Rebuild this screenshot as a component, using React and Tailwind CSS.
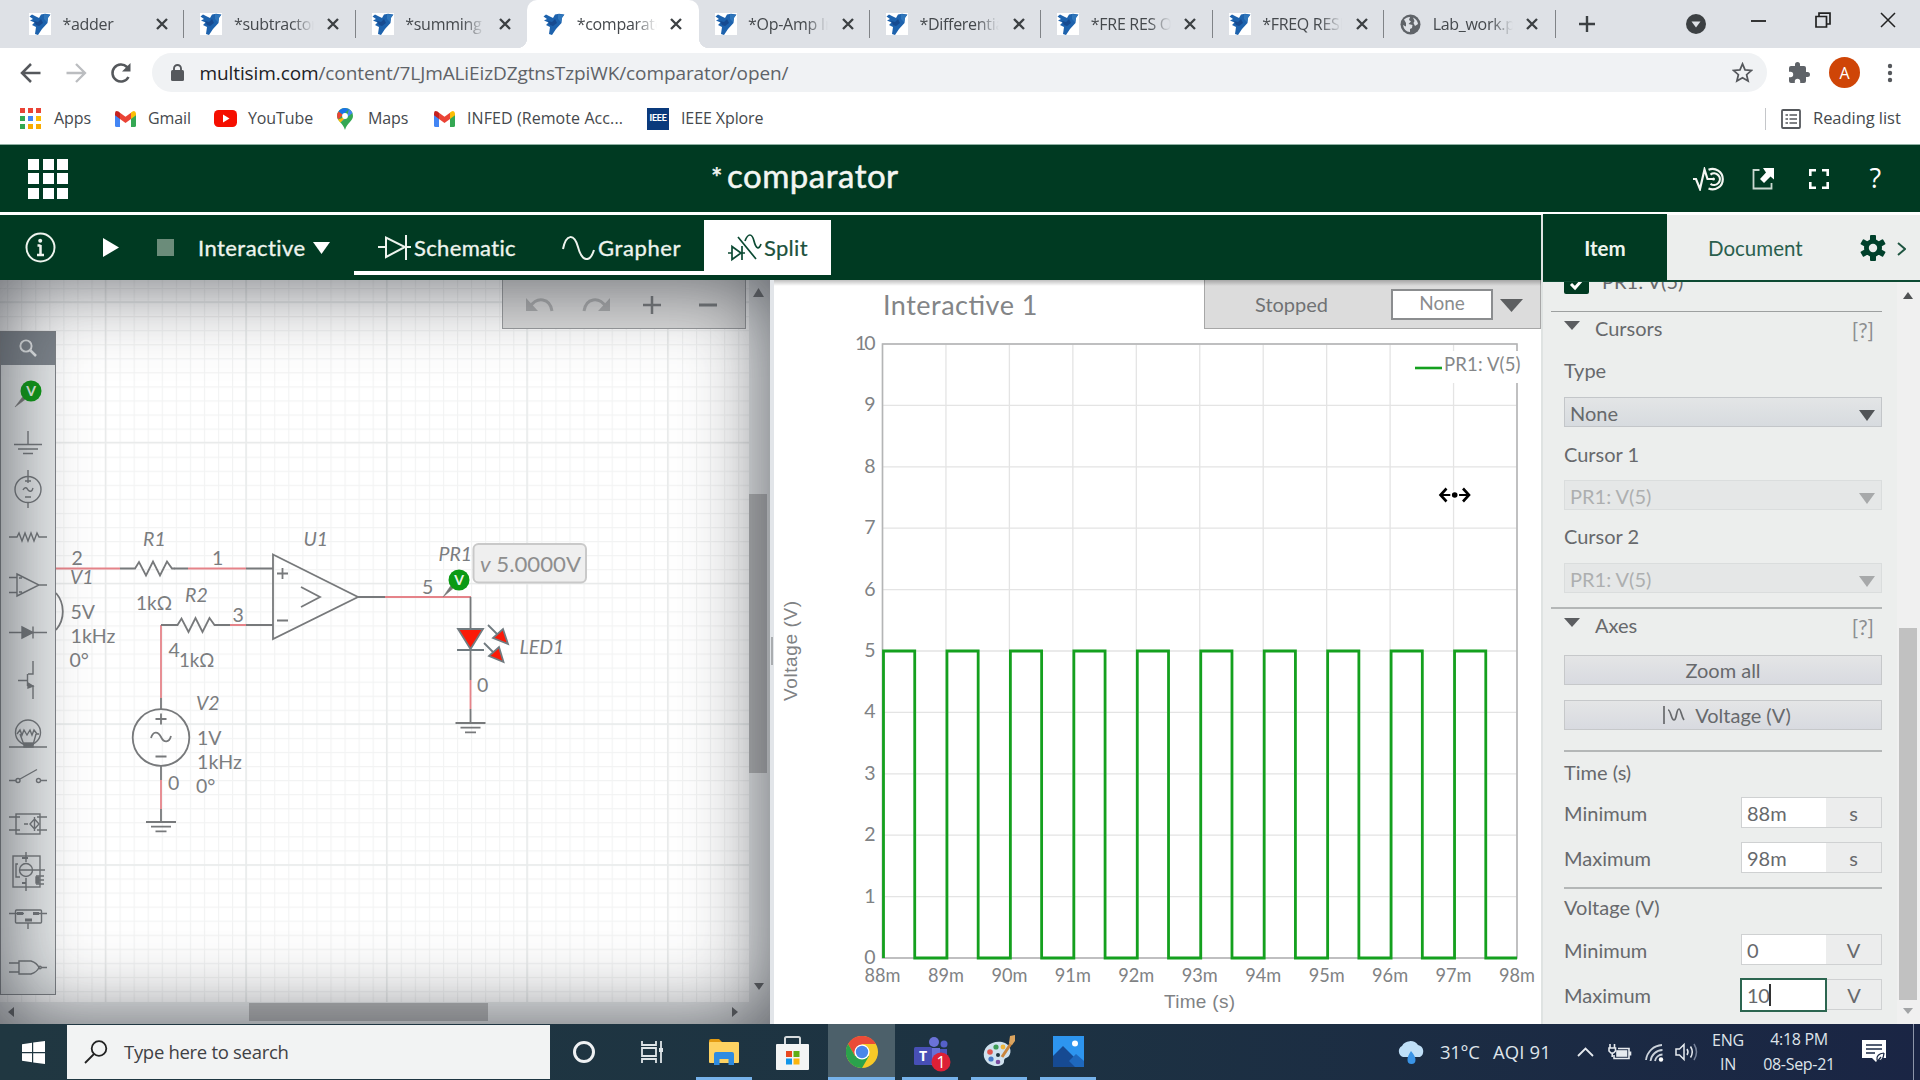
import React from 'react';

const UI = "font-['Open_Sans','Noto_Sans',sans-serif]";

/* ---------- Browser chrome ---------- */

const NiBird = () => (
  <svg width="22" height="22" viewBox="0 0 22 22" className="shrink-0">
    <rect width="22" height="22" fill="#fff" />
    <path d="M0.500 3.500 L3 1.500 L8 4 L10 5 L12 1.500 L16 0.800 L21.500 1.500 L19 4.500 L18.500 10 L13 16 L9 22 L6 21 L7 14 L3 12 L5.500 9.500 L1 7.500 L4 6 Z" fill="#1d62ad" />
    <path d="M5 8 L9 9 L12 6 L14 10 L10 13 L7 12 Z" fill="#164a90" />
    <path d="M15 1 L21 2 L19 5 L18 9 L15 6 Z" fill="#2f76bb" />
  </svg>
);

const GlobeIcon = () => (
  <svg width="21" height="21" viewBox="0 0 21 21" className="shrink-0">
    <circle cx="10.500" cy="10.500" r="10" fill="#5f6368" />
    <path d="M4 5.500 Q7 2.500 10 3 L9 6 L11 7.500 L8.500 10 L12.500 11 L12 14 L10 15 L10 18 Q4 17.500 3 11 L6 12.500 L6 9 Z M13 3.500 Q17.500 5.500 18 10 L15 12 L13.500 9 L14.500 7 Z" fill="#dee1e6" />
  </svg>
);

const Close = () => (
  <svg width="12" height="12" viewBox="0 0 12 12" className="shrink-0">
    <path d="M1 1 L11 11 M11 1 L1 11" stroke="#3c4043" strokeWidth="2.300" />
  </svg>
);

const tabs = [
  { t: '*adder', sep: true },
  { t: '*subtractor', sep: true },
  { t: '*summing' },
  { t: '*comparator', active: true },
  { t: '*Op-Amp In', sep: true },
  { t: '*Differential', sep: true },
  { t: '*FRE RES OF', sep: true },
  { t: '*FREQ RESP', sep: true },
  { t: 'Lab_work.pdf', globe: true, sep: true },
];

function Tab({ tab }) {
  return (
    <div className={'relative flex h-[48px] w-[171.4px] shrink-0 items-center pl-[16px] ' + (tab.active ? 'rounded-t-[10px] bg-white' : '')}>
      {tab.active && (
        <>
          <span className="absolute bottom-0 -left-[10px] h-[10px] w-[10px] bg-[radial-gradient(circle_at_0_0,transparent_10px,white_10.5px)]" />
          <span className="absolute bottom-0 -right-[10px] h-[10px] w-[10px] bg-[radial-gradient(circle_at_100%_0,transparent_10px,white_10.5px)]" />
        </>
      )}
      {tab.globe ? <GlobeIcon /> : <NiBird />}
      <span className="ml-[11.5px] w-[80px] overflow-hidden text-[16px] tracking-[-0.3px] whitespace-nowrap text-[#45494d] [mask-image:linear-gradient(to_right,black_72%,transparent)]">{tab.t}</span>
      <span className="ml-[13.5px]"><Close /></span>
      {tab.sep && <span className="absolute top-[10px] right-0 h-[28px] w-px bg-[#808387]" />}
    </div>
  );
}

function TabStrip() {
  return (
    <div className="flex h-[48px] items-center bg-[#dee1e6] pl-[13px]">
      {tabs.map((t) => <Tab key={t.t} tab={t} />)}
      <svg width="18" height="18" viewBox="0 0 18 18" className="ml-[22px]"><path d="M9 1 V17 M1 9 H17" stroke="#3c4043" strokeWidth="2.400" /></svg>
      <svg width="20" height="20" viewBox="0 0 20 20" className="ml-[90px]"><circle cx="10" cy="10" r="10" fill="#3c4043" /><path d="M5.500 7.500 H14.500 L10 13.500 Z" fill="#dee1e6" /></svg>
      <div className="mb-[8px] ml-[45px] flex items-center">
        <svg width="15" height="15" viewBox="0 0 15 15"><path d="M0 8 H15" stroke="#222" strokeWidth="1.800" /></svg>
        <svg width="16" height="16" viewBox="0 0 16 16" className="ml-[49px]"><path d="M1 4.500 H11.500 V15 H1 Z M4 4.500 V1.200 H15 V12 H11.500" fill="none" stroke="#222" strokeWidth="1.700" /></svg>
        <svg width="16" height="16" viewBox="0 0 16 16" className="ml-[49px]"><path d="M1 1 L15 15 M15 1 L1 15" stroke="#222" strokeWidth="1.500" /></svg>
      </div>
    </div>
  );
}

function AddressBar() {
  return (
    <div className="flex h-[49px] items-center bg-white pl-[20px]">
      <svg width="22" height="22" viewBox="0 0 22 22"><path d="M20.500 11 H2.500 M11 2 L2 11 L11 20" fill="none" stroke="#55585c" strokeWidth="2.500" /></svg>
      <svg width="22" height="22" viewBox="0 0 22 22" className="ml-[23px]"><path d="M1.500 11 H19.500 M11 2 L20 11 L11 20" fill="none" stroke="#bbbdc0" strokeWidth="2.300" /></svg>
      <svg width="22" height="22" viewBox="0 0 22 22" className="ml-[23px]"><path d="M18.500 15 A8.500 8.500 0 1 1 17 5 L19 7" fill="none" stroke="#55585c" strokeWidth="2.500" /><path d="M20.500 1 V9.500 H12 Z" fill="#55585c" /></svg>
      <div className="ml-[20px] flex h-[39px] w-[1615px] items-center rounded-full bg-[#f0f2f4] pl-[19px]">
        <svg width="13" height="17" viewBox="0 0 13 17"><rect y="6" width="13" height="11" rx="1.500" fill="#55585c" /><path d="M3 7 V4.500 A3.500 3.500 0 0 1 10 4.500 V7" fill="none" stroke="#55585c" strokeWidth="1.900" /></svg>
        <span className="ml-[15.5px] w-[1532.5px] pt-[2px] text-[19px] tracking-[-0.1px] whitespace-nowrap text-[#5f6368]"><span className="text-[#202124]">multisim.com</span>/content/7LJmALiEizDZgtnsTzpiWK/comparator/open/</span>
        <svg width="21" height="21" viewBox="0 0 24 24" className="shrink-0"><path d="M12 2.200 L14.900 9 L22.300 9.600 L16.700 14.500 L18.400 21.700 L12 17.900 L5.600 21.700 L7.300 14.500 L1.700 9.600 L9.100 9 Z" fill="none" stroke="#55585c" strokeWidth="2" /></svg>
      </div>
      <svg width="24" height="24" viewBox="0 0 24 24" className="ml-[20px]"><path d="M20.500 11H19V7a2 2 0 0 0-2-2h-4V3.500a2.500 2.500 0 0 0-5 0V5H4a2 2 0 0 0-2 2v3.800h1.500a2.700 2.700 0 0 1 0 5.400H2V20a2 2 0 0 0 2 2h3.800v-1.500a2.700 2.700 0 0 1 5.400 0V22H17a2 2 0 0 0 2-2v-4h1.500a2.500 2.500 0 0 0 0-5z" fill="#5f6368" /></svg>
      <span className="ml-[18px] flex h-[31px] w-[31px] items-center justify-center rounded-full bg-[#cf4507] text-[16px] text-white">A</span>
      <svg width="6" height="20" viewBox="0 0 6 20" className="ml-[27px]"><g fill="#55585c"><circle cx="3" cy="3" r="2.200" /><circle cx="3" cy="10" r="2.200" /><circle cx="3" cy="17" r="2.200" /></g></svg>
    </div>
  );
}

const GmailIcon = () => (
  <svg width="21" height="16" viewBox="0 0 21 16" className="shrink-0">
    <path d="M0 3 V14.500 Q0 16 1.500 16 H5 V6 Z" fill="#4285f4" />
    <path d="M21 3 V14.500 Q21 16 19.500 16 H16 V6 Z" fill="#34a853" />
    <path d="M16 1.500 V8 L21 4.200 V2.500 Q20.500 -1 17.500 0.400 Z" fill="#fbbc04" />
    <path d="M5 8 V1.700 L10.500 5.800 L16 1.700 V8 L10.500 12 Z" fill="#ea4335" />
    <path d="M0 2.500 V4.200 L5 8 V1.700 L3.500 0.500 Q0 -1 0 2.500 Z" fill="#c5221f" />
  </svg>
);

const appColors = ['#ea4335', '#ea4335', '#ea4335', '#34a853', '#4285f4', '#fbbc04', '#34a853', '#f9ab00', '#f9ab00'];

function Bookmark({ icon, children, cls }) {
  return (
    <div className={'flex shrink-0 items-center ' + cls}>{icon}<span className="-mt-px whitespace-nowrap">{children}</span></div>
  );
}

function Bookmarks() {
  return (
    <div className="flex h-[47px] items-center bg-white pb-[4px] pl-[20px] text-[16px] tracking-[-0.1px] text-[#45494d]">
      <Bookmark cls="w-[95px] gap-[13px]" icon={<span className="grid grid-cols-3 gap-[3px]">{appColors.map((c, i) => <i key={i} className="h-[5px] w-[5px]" style={{ background: c }} />)}</span>}>Apps</Bookmark>
      <Bookmark cls="w-[99px] gap-[12px]" icon={<GmailIcon />}>Gmail</Bookmark>
      <Bookmark cls="w-[123px] gap-[11px]" icon={<svg width="23" height="17" viewBox="0 0 23 17"><rect width="23" height="17" rx="4.500" fill="#f50f00" /><path d="M9 4.500 L15.500 8.500 L9 12.500 Z" fill="#fff" /></svg>}>YouTube</Bookmark>
      <Bookmark cls="w-[97px] gap-[15px]" icon={<svg width="16" height="22" viewBox="0 0 16 22"><path d="M8 0 A8 8 0 0 1 16 8 C16 13 10 15 8 22 C6 15 0 13 0 8 A8 8 0 0 1 8 0 Z" fill="#34a853" /><path d="M8 0 A8 8 0 0 0 1.500 3.500 L6 7 L12 1 Z" fill="#1a73e8" /><path d="M1.500 3.500 A8 8 0 0 0 1 11.500 L6 7 Z" fill="#ea4335" /><path d="M1 11.500 Q2 13 3.500 14.500 L11 8 Z" fill="#fbbc04" /><path d="M12 1 A8 8 0 0 1 15.500 5 L3.500 14.500 L10 8 Z" fill="#4285f4" /><circle cx="8" cy="8" r="2.900" fill="#fff" /></svg>}>Maps</Bookmark>
      <Bookmark cls="w-[213px] gap-[12px] tracking-[0.08px]" icon={<GmailIcon />}>INFED (Remote Acc...</Bookmark>
      <Bookmark cls="w-[200px] gap-[12px]" icon={<span className="flex h-[22px] w-[22px] items-center justify-center bg-[#0a3a7c] font-['Roboto',sans-serif] text-[9px] font-bold tracking-[-0.2px] text-white">IEEE</span>}>IEEE Xplore</Bookmark>
      <div className="ml-auto flex w-[155px] items-center">
        <i className="h-[22px] w-px bg-[#c4c6c9]" />
        <svg width="20" height="20" viewBox="0 0 20 20" className="mr-[12px] ml-[15px]"><rect x="1" y="1" width="18" height="18" rx="1" fill="none" stroke="#55585c" strokeWidth="1.800" /><path d="M4.500 6 H7 M8.500 6 H16 M4.500 10 H7 M8.500 10 H16 M4.500 14 H7 M8.500 14 H16" stroke="#55585c" strokeWidth="1.700" /></svg>
        <span className="text-[16.5px] tracking-[-0.05px] whitespace-nowrap">Reading list</span>
      </div>
    </div>
  );
}

/* ---------- Application header ---------- */

function AppHeader() {
  return (
    <div className="flex h-[68px] items-center border-t border-[#8fb0a3] bg-[#003a22] pl-[28px] font-['Lato',sans-serif] text-white">
      <div className="grid grid-cols-3 gap-[3.5px]">
        {Array.from({ length: 9 }, (_, i) => <i key={i} className="h-[11px] w-[11px] bg-white" />)}
      </div>
      <h1 className="-mt-[5px] ml-[643px] w-[981.5px] text-[33px] tracking-[0.5px] whitespace-nowrap text-[#f3f6f2] [-webkit-text-stroke:0.5px_#f3f6f2]"><span className="text-[27px]">*</span><span className="ml-[4px]">comparator</span></h1>
      <svg width="33" height="24" viewBox="0 0 33 24" fill="none" stroke="#f3f6f2" strokeWidth="2.200"><path d="M0 12 H3 L7 22 L11.500 2.500 L14.500 12 H21" /><path d="M15.500 2.800 A10.200 10.200 0 1 1 15.500 21.500" /><path d="M17.500 7.600 A5.800 5.800 0 1 1 17.500 16.800" /><circle cx="20.500" cy="12" r="1.500" fill="#f3f6f2" stroke="none" /></svg>
      <svg width="22" height="22" viewBox="0 0 22 22" className="ml-[26px]"><path d="M7.500 2 H1.500 V20.500 H19.500 V15" fill="none" stroke="#c9d8cf" strokeWidth="1.800" /><path d="M11 0 H22 V11.500 L18.500 8.500 L12 15 L8 11 L14 4.500 Z" fill="#fff" /></svg>
      <svg width="20" height="20" viewBox="0 0 20 20" className="ml-[35px]" fill="none" stroke="#fff" strokeWidth="2.600"><path d="M1.300 7 V1.300 H7 M13 1.300 H18.700 V7 M18.700 13 V18.700 H13 M7 18.700 H1.300 V13" /></svg>
      <span className="ml-[41px] font-['Open_Sans',sans-serif] text-[27px]">?</span>
    </div>
  );
}

function Toolbar() {
  return (
    <div className="flex h-[65px] w-[1541px] items-center bg-[#003a22] text-[22px] text-[#eef4ee] [-webkit-text-stroke:0.35px]">
      <svg width="31" height="31" viewBox="0 0 31 31" className="ml-[25px]"><circle cx="15.500" cy="15.500" r="14" fill="none" stroke="#eef4ee" strokeWidth="2" /><path d="M15.500 13 V23 M12.500 13.500 H15.500 M12 23 H19" stroke="#eef4ee" strokeWidth="2.500" /><circle cx="15.200" cy="8.800" r="2" fill="#eef4ee" /></svg>
      <svg width="16" height="19" viewBox="0 0 16 19" className="ml-[47px]"><path d="M0 0 L16 9.500 L0 19 Z" fill="#fff" /></svg>
      <i className="ml-[38px] h-[17px] w-[17px] bg-[#6b8c7a]" />
      <span className="ml-[24px] w-[115px] tracking-[0.45px] whitespace-nowrap">Interactive</span>
      <svg width="17" height="12" viewBox="0 0 17 12"><path d="M0 0 H17 L8.500 12 Z" fill="#fff" /></svg>
      <div className="mt-[5px] ml-[24px] flex h-[55px] w-[350px] items-center self-start border-b-4 border-white pt-[4px]">
        <svg width="33" height="26" viewBox="0 0 33 26" className="ml-[24px]" fill="none" stroke="#eef4ee" strokeWidth="2"><path d="M0 12 H8 M8 2.500 V22 L27 12 Z M28 0 V25 M28 12 H33" /></svg>
        <span className="ml-[3px] w-[148px] tracking-[0.35px] whitespace-nowrap">Schematic</span>
        <svg width="33" height="24" viewBox="0 0 33 24" fill="none" stroke="#eef4ee" strokeWidth="2"><path d="M1 13 C4 -2 12 -3 16 11 C20 26 28 27 32 14" /></svg>
        <span className="ml-[3px] tracking-[0.6px] whitespace-nowrap">Grapher</span>
      </div>
      <div className="mt-[5px] flex h-[55px] w-[127px] items-center self-start bg-white text-[#1c513c] [-webkit-text-stroke:0.2px]">
        <svg width="34" height="28" viewBox="0 0 34 28" className="ml-[24px]" fill="none" stroke="#0c4a33" strokeWidth="1.700"><path d="M0 19 H4 M4 12.500 V25.500 L13 19 Z M14 12 V26 M14 19 H17 M10 3 L28 25 M17 7 C20 -1 24 -1 26 7 C28 15 31 16 33 10" /></svg>
        <span className="ml-[2px] tracking-[0.3px]">Split</span>
      </div>
    </div>
  );
}

/* ---------- Schematic ---------- */

const G = '#77797b';
const R = '#e58389';

const Zig = ({ x, y }) => (
  <path d={`M${x} ${y} l2 0 l4 -6.500 l7 13.500 l7 -14 l7 14 l7 -14 l5 7 l2.500 0`} fill="none" stroke={G} strokeWidth="1.800" />
);
const Ground = ({ x, y }) => (
  <path d={`M${x - 15} ${y} h30 M${x - 10} ${y + 4.700} h20 M${x - 5.500} ${y + 9.400} h11`} stroke={G} strokeWidth="1.800" />
);
const Probe = ({ x, y, tx, ty }) => (
  <g>
    <path d={`M${tx} ${ty} L${x - 8.500} ${y + 6} L${x - 6} ${y + 8.500} Z`} fill="#777" stroke="#777" strokeWidth="0.500" />
    <circle cx={x} cy={y} r="10.500" fill="#0b9a14" />
    <text x={x} y={y + 5} textAnchor="middle" fontSize="14" fontWeight="700" fill="#e9f7e9">V</text>
  </g>
);

/* text, x, baseline, italic */
const labels = [
  ['R1', 143, 545.5, 1], ['2', 71.5, 565], ['V1', 70, 584, 1], ['1', 212, 565], ['R2', 185, 602, 1],
  ['3', 232.5, 621.5], ['5V', 70.5, 618.5], ['0°', 69.5, 666.5], ['4', 168.5, 657],
  ['V2', 196, 709.5, 1], ['1V', 197, 745], ['0°', 196, 793], ['0', 168, 790], ['U1', 303.5, 545.5, 1],
  ['PR1', 438.5, 561, 1], ['5', 422, 593.5], ['LED1', 519.5, 654, 1], ['0', 477, 692],
];
const wideLabels = [['1kΩ', 136, 610, 36], ['1kHz', 70.5, 642.5, 45], ['1kΩ', 179, 666.5, 35.5], ['1kHz', 197, 769, 45]];

function SchematicDrawing() {
  return (
    <svg width="770" height="744" viewBox="0 280 770 744" className="absolute inset-0" fontFamily="Lato, sans-serif">
      <defs>
        <pattern id="minor" x="105.500" y="302" width="14.060" height="14.060" patternUnits="userSpaceOnUse">
          <path d="M0.500 0 V14.060 M0 0.500 H14.060" stroke="#f2f3f3" strokeWidth="1.200" />
        </pattern>
      </defs>
      <rect x="0" y="280" width="749" height="722" fill="#fff" />
      <rect x="0" y="280" width="749" height="722" fill="url(#minor)" />
      <g stroke="#e9ebeb" strokeWidth="1.500">
        {[105.500, 246, 386.700, 527, 667.700].map((x) => <path key={x} d={`M${x} 280 V1002`} />)}
        {[302, 442.500, 583.500, 724, 865].map((y) => <path key={y} d={`M0 ${y} H749`} />)}
      </g>
      <g fill="none" stroke={R} strokeWidth="1.800">
        <path d="M56 568.500 H120 M188 568.500 H246 M230 625 H246 M161 625 V698 M161 780 V809 M385 597 H471 M470.500 680 V709" />
      </g>
      <g fill="none" stroke={G} strokeWidth="1.800">
        <path d="M120 568.500 H133 M174 568.500 H188 M246 568.500 H273 M161 625 H176 M216 625 H230 M246 625 H273 M161 698 V709 M161 766 V780 M161 809 V822 M358 597 H385 M470.500 597 V629 M470.500 650 V680 M470.500 709 V723" />
        <path d="M273 554.500 L358 597 L273 639 Z M277 573.500 h11 M282.500 568 v11 M277 620.500 h11 M301 587 L320 597 L301 607" />
        <circle cx="161" cy="737.500" r="28.300" />
        <path d="M155.500 719 h11 M161 713.500 v11 M155.500 756.500 h11 M151 738 C153 731 158 731 161 737 C164 743 169 743 171 736" />
        <path d="M56 593 A28.500 28.500 0 0 1 56 630" />
      </g>
      <Zig x={133} y={568.500} />
      <Zig x={175.500} y={625} />
      <Ground x={161} y={822} />
      <Ground x={470.500} y={723} />
      <g stroke="#717b80" strokeWidth="1.800">
        <path d="M458 629 H483 L470.500 649 Z" fill="#fb1a08" />
        <path d="M457 650 H484 M488 625 L500 637 M484 643 L496 655" />
        <path d="M508 644 L503 629 L493 638 Z M503.500 662 L499 647 L489 656 Z" fill="#fb1a08" />
      </g>
      <Probe x={459} y={580} tx={443} ty={597} />
      <rect x="473.500" y="544" width="112.500" height="38.500" rx="5" fill="#efefef" stroke="#c9c9c9" strokeWidth="2" />
      <text x="480" y="571.500" fontSize="20.500" fill="#8e8e8e" textLength="101" lengthAdjust="spacingAndGlyphs"><tspan fontStyle="italic">v</tspan> 5.0000V</text>
      <g fontSize="19.500" fill="#7b7d7f">
        {labels.map(([t, x, y, it], i) => <text key={i} x={x} y={y} fontStyle={it ? 'italic' : 'normal'}>{t}</text>)}
        {wideLabels.map(([t, x, y, w], i) => <text key={i} x={x} y={y} textLength={w} lengthAdjust="spacingAndGlyphs">{t}</text>)}
      </g>
    </svg>
  );
}

function Palette() {
  return (
    <div className="absolute top-[51px] left-0 flex h-[664px] w-[56px] flex-col border border-[#808488] bg-[#e6e9ea]">
      <div className="flex h-[33px] items-center justify-center bg-[#7e858c] pb-[2px]">
        <svg width="18" height="18" viewBox="0 0 18 18" fill="none" stroke="#eceff0" strokeWidth="1.900"><circle cx="7" cy="7" r="5.600" /><path d="M11 11 L17 17" strokeWidth="2.500" /></svg>
      </div>
      <svg width="54" height="629" viewBox="1 365 54 629" fill="none" stroke="#74787b" strokeWidth="1.400" fontFamily="Lato, sans-serif">
        <g stroke="none"><Probe x={31} y={391} tx={15} ty={407} /></g>
        <path d="M28 431 V444 M14 444.500 H42 M18 449 H38 M23 453.500 H33" />
        <circle cx="28" cy="489.500" r="13" /><path d="M28 470 V483 M25 481 H31 M28 503 V508 M25 497 H31 M23 490 C25 486 27 488 28 490 C30 492 32 492 33 488" />
        <path d="M9 537 H17 L19 533 L22 541 L25 533 L28 541 L31 533 L34 541 L37 533 L39 537 H47" />
        <path d="M17 574 V596 L39 585 Z M9 577.500 H17 M9 592.500 H17 M39 585 H47 M19 578 H22 M19 592 H22" />
        <path d="M9 632.500 H47 M33 626.500 V638.500" /><path d="M22 627 L33 632.500 L22 638 Z" fill="#74787b" />
        <path d="M18 680.500 H27 M27.500 674 V686 M28 674 H33 V661 M28 686 H33 V699" /><path d="M28 683 L33 686 L28 688 Z" fill="#74787b" />
        <circle cx="28" cy="732.500" r="12.500" /><path d="M17 734 L20 730 L22 735 L24 730 L27 735 L30 730 L32 735 L34 730 L37 734 H39 M20 734 L24 745 M36 734 L33 745 M9 747 H47" /><rect x="24" y="743" width="9" height="4" fill="#74787b" />
        <circle cx="18" cy="780.500" r="2" /><circle cx="38.500" cy="780.500" r="2" /><path d="M9 780.500 H16 M40.500 780.500 H47 M20 779 L37 769.500" />
        <rect x="16" y="814" width="24" height="20" /><path d="M9 817 H20 M9 830 H20 M37 817 H47 M37 830 H47 M24 824 H28 M34.500 819 L39 824 L34.500 829 L30 824 Z M34.500 817 V831" />
        <rect x="13" y="856" width="27" height="31" /><circle cx="26" cy="870" r="6.500" /><path d="M26 852 V862 M26 878 V891 M18 864 H16 V877 H20 M20 870 H45 M36 876 H44 M36 880 H44 M36 884 H44" /><rect x="36" y="877" width="3" height="6" fill="#74787b" /><path d="M22 858 H28 M22 883 H26" strokeWidth="2" />
        <rect x="15.500" y="910" width="26" height="13" rx="1" /><path d="M9 913.500 H24 M33 913.500 H47 M28 923 V929" /><path d="M17 913.500 H23 M33 913.500 H39 M25 920 H32" strokeWidth="3" />
        <path d="M19 961 H31 Q37 963 39 967.500 Q37 972 31 974 H19 Z M9 963 H19 M9 972 H19 M41 967.500 H47" /><circle cx="40" cy="967.500" r="1.200" />
      </svg>
    </div>
  );
}

function SchematicPane() {
  return (
    <div className="relative h-[744px] w-[770px] overflow-hidden bg-[#e9ebec]">
      <SchematicDrawing />
      <Palette />
      <div className="absolute top-0 right-0 flex h-[722px] w-[21px] flex-col items-center bg-[#e9ebec]">
        <svg width="11" height="9" viewBox="0 0 11 9" className="mt-[8px] -ml-[2px]"><path d="M0 9 L5.500 0 L11 9 Z" fill="#707274" /></svg>
        <i className="mt-[197px] -ml-[3px] h-[279px] w-[18px] bg-[#b4b5b6]" />
        <svg width="10" height="7" viewBox="0 0 10 7" className="mt-auto mb-[12px] -ml-[2px]"><path d="M0 0 H10 L5 7 Z" fill="#616365" /></svg>
      </div>
      <div className="absolute bottom-0 left-0 flex h-[22px] w-full items-center bg-[#e9ebec] pb-[2px]">
        <svg width="6" height="10" viewBox="0 0 6 10" className="ml-[8px]"><path d="M6 0 V10 L0 5 Z" fill="#616365" /></svg>
        <i className="ml-[235px] h-[18px] w-[239px] bg-[#b4b5b6]" />
        <svg width="6" height="10" viewBox="0 0 6 10" className="ml-[244px]"><path d="M0 0 V10 L6 5 Z" fill="#616365" /></svg>
      </div>
      <div className="absolute top-0 left-[502px] flex h-[49px] w-[244px] items-center justify-between border border-t-0 border-[#9b9d9f] bg-[#dcdcdc] pt-[2px] pr-[23px] pl-[22px]">
        <svg width="29" height="16" viewBox="0 0 29 16"><path d="M1 1 V14 H13 Z" fill="#acadae" /><path d="M5 10 C12 -1 25 1 27 14" fill="none" stroke="#acadae" strokeWidth="3" /></svg>
        <svg width="29" height="16" viewBox="0 0 29 16"><path d="M28 1 V14 H16 Z" fill="#acadae" /><path d="M24 10 C17 -1 4 1 2 14" fill="none" stroke="#acadae" strokeWidth="3" /></svg>
        <svg width="28" height="18" viewBox="0 0 28 18"><path d="M14 0 V18 M5 9 H23" stroke="#777a7c" strokeWidth="2.500" /></svg>
        <svg width="28" height="18" viewBox="0 0 28 18"><path d="M5 9 H23" stroke="#777a7c" strokeWidth="3" /></svg>
      </div>
      <div className="pointer-events-none absolute inset-0 shadow-[inset_0_0_84px_rgba(46,50,57,0.8)]" />
    </div>
  );
}

/* ---------- Grapher ---------- */

const X0 = 882.500, X1 = 1517, Y0 = 344, Y1 = 958;
const px = (ms) => X0 + ((ms - 88) * (X1 - X0)) / 10;
const py = (v) => Y1 - (v * (Y1 - Y0)) / 10;
let wave = `M${X0 + 1} ${Y1}`;
for (let i = 0; i < 10; i++) {
  const a = px(88 + i) + 1;
  const b = px(88.500 + i) + 0.500;
  wave += ` L${a} ${Y1} L${a} ${py(5)} L${b} ${py(5)} L${b} ${Y1}`;
}
wave += ` L${X1} ${Y1}`;

function GrapherPane() {
  const ticks = Array.from({ length: 11 }, (_, i) => i);
  return (
    <div className="relative h-[744px] w-[771px] border-l-4 border-[#e2e5e9] bg-white">
      <svg width="767" height="744" viewBox="774 280 767 744" fontFamily="Lato, sans-serif">
        <text x="883" y="314.500" fontSize="27" fill="#838587" textLength="154.500">Interactive 1</text>
        <g stroke="#e4e4e4" strokeWidth="1.300">
          {ticks.map((i) => <path key={i} d={`M${px(88 + i)} ${Y0} V${Y1} M${X0} ${py(i)} H${X1}`} />)}
        </g>
        <rect x={X0} y={Y0} width={X1 - X0} height={Y1 - Y0} fill="none" stroke="#b4b5b6" strokeWidth="1.600" />
        <rect x="1412" y="351" width="110" height="32" fill="#fff" />
        <path d={wave} fill="none" stroke="#14a01e" strokeWidth="2.800" />
        <path d="M1415 368 H1442" stroke="#14a01e" strokeWidth="2.600" />
        <text x="1444" y="371" fontSize="18.500" fill="#858789" textLength="76.500">PR1: V(5)</text>
        <g fontSize="19.500" fill="#808284">
          {ticks.map((i) => <text key={i} x="875.500" y={py(i) + 6} textAnchor="end" textLength={i === 10 ? 20.500 : undefined}>{i}</text>)}
          {ticks.map((i) => <text key={i} x={px(88 + i)} y="981.500" textAnchor="middle" textLength="36" lengthAdjust="spacingAndGlyphs">{88 + i}m</text>)}
        </g>
        <g fontFamily="Liberation Sans, sans-serif" fontSize="19" fill="#808284">
          <text x="1199.500" y="1008" textAnchor="middle" textLength="71">Time (s)</text>
          <text transform="translate(796.500 651) rotate(-90)" textAnchor="middle" textLength="100">Voltage (V)</text>
        </g>
        <g stroke="#000" fill="none"><path d="M1440.500 495 H1469" strokeWidth="2" /><path d="M1446.500 488.500 L1440.500 495 L1446.500 501.500 M1463 488.500 L1469 495 L1463 501.500" strokeWidth="2.600" /></g>
        <circle cx="1454.700" cy="495" r="4.500" fill="#fff" /><circle cx="1454.700" cy="495" r="2.800" fill="#000" />
      </svg>
      <i className="absolute top-[357px] -left-[3px] h-[28px] w-[2px] bg-[#a9acaf]" />
      <div className="absolute top-0 right-0 flex h-[49px] w-[337px] items-center border border-t-0 border-[#a7a7a7] bg-[#dcdcdc] text-[20px] text-[#707274]">
        <span className="ml-[50px] w-[136px]">Stopped</span>
        <span className="flex h-[31px] w-[102px] items-center justify-center border-2 border-[#8b8d8f] bg-white pb-px text-[19px] text-[#8a8c8e]">None</span>
        <svg width="23" height="13" viewBox="0 0 23 13" className="mt-[3px] ml-[7px]"><path d="M0 0 H23 L11.500 13 Z" fill="#5d5f61" /></svg>
      </div>
      <div className="absolute top-0 left-0 h-[6px] w-full bg-linear-to-b from-black/25 to-transparent" />
    </div>
  );
}

/* ---------- Properties panel ---------- */

const Caret = () => <svg width="16" height="9" viewBox="0 0 16 9"><path d="M0 0 H16 L8 9 Z" fill="#5b5d60" /></svg>;

const Section = ({ children, cls }) => (
  <div className={'flex items-center pl-[20px] text-[20px] ' + cls}>
    <span className="mb-[5px]"><Caret /></span>
    <span className="ml-[15px]">{children}</span>
    <span className="mt-[4px] mr-[8px] ml-auto text-[21px] text-[#8d8f91]">[?]</span>
  </div>
);

const Select = ({ children, disabled, cls }) => (
  <div className={'flex h-[30px] w-[318px] items-center justify-between border pt-[2px] pr-[6px] pl-[5px] ' + cls + (disabled ? ' border-[#dadddd] bg-[#e5e7e7] text-[#adafb0]' : ' border-[#c3c6c9] bg-linear-to-b from-[#e3e5e6] to-[#d7dbdf]')}>
    <span>{children}</span>
    <svg width="16" height="11" viewBox="0 0 16 11" className="mt-[4px]"><path d="M0 0 H16 L8 11 Z" fill={disabled ? '#a7a9aa' : '#515457'} /></svg>
  </div>
);

const Field = ({ label, value, unit, focus, cls }) => (
  <div className={'flex h-[31px] w-[318px] items-center ' + cls}>
    <span className="w-[177px] pt-[1px]">{label}</span>
    <div className="flex h-[31px] w-[141px] items-center border border-[#cfd1d2] bg-[#eceded]">
      <span className={'flex items-center bg-white ' + (focus ? '-my-px -ml-[2px] h-[34px] w-[87px] border-2 border-[#2c6650] pl-[5px] tracking-[-0.4px]' : 'h-full w-[84px] pl-[5px]')}>
        {value}{focus && <i className="h-[22px] w-[1.5px] bg-[#333]" />}
      </span>
      <span className="flex-1 text-center">{unit}</span>
    </div>
  </div>
);

const Btn = ({ children, cls }) => (
  <div className={'flex h-[30px] w-[318px] items-center justify-center border border-[#c6c8ca] bg-linear-to-b from-[#e4e5e6] to-[#d8dae0] ' + cls}>{children}</div>
);

function Panel() {
  return (
    <aside className="flex h-[809px] w-[379px] flex-col border-l-2 border-[#dfe3e2] bg-[#eceeed] font-['Lato',sans-serif]">
      <div className="flex h-[67px] shrink-0 items-center border-b-2 border-[#0d4a33] text-[20.5px]">
        <div className="flex h-[67px] w-[124px] items-center justify-center bg-[#003a22] pt-[2px] font-bold text-[#eef4ee]">Item</div>
        <span className="ml-[41px] w-[91px] pt-[2px] text-[#2a5f4d]">Document</span>
        <svg width="26" height="26" viewBox="-13 -13 26 26" className="ml-[61px]" fill="#00402b"><circle r="9" />{[0, 60, 120].map((a) => <rect key={a} x="-3" y="-13" width="6" height="26" rx="1" transform={`rotate(${a})`} />)}<circle r="4.200" fill="#eceeed" /></svg>
        <svg width="9" height="14" viewBox="0 0 9 14" className="mt-[2px] ml-[11px]"><path d="M1 1 L8 7 L1 13" fill="none" stroke="#1f5541" strokeWidth="1.900" /></svg>
      </div>
      <div className="flex flex-1 overflow-hidden text-[#67696c]">
        <div className="w-[354px] pl-[8px] text-[20px] leading-[24px]">
          <div className="w-[331px]">
            <div className="flex h-[30px] items-start overflow-hidden border-b border-[#9da0a0] pl-[13px]">
              <svg width="25" height="25" viewBox="0 0 25 25" className="-mt-[13px]"><rect width="25" height="25" rx="2" fill="#003a22" /><path d="M7 15 L11 19 L18 11" fill="none" stroke="#fff" strokeWidth="3" /></svg>
              <span className="-mt-[13px] ml-[13px]">PR1: V(5)</span>
            </div>
            <Section cls="mt-[3px] h-[25px] -ml-[7px]">Cursors</Section>
            <div className="pl-[13px]">
              <div className="mt-[18px] h-[24px]">Type</div>
              <Select cls="mt-[15px]">None</Select>
              <div className="mt-[15px] h-[24px]">Cursor 1</div>
              <Select disabled cls="mt-[14px]">PR1: V(5)</Select>
              <div className="mt-[14px] h-[24px]">Cursor 2</div>
              <Select disabled cls="mt-[15px]">PR1: V(5)</Select>
            </div>
            <div className="mt-[14px] h-[2px] bg-[#b4b7b7]" />
            <Section cls="mt-[3px] h-[25px] -ml-[7px]">Axes</Section>
            <div className="pl-[13px]">
              <Btn cls="mt-[18px]">Zoom all</Btn>
              <Btn cls="mt-[15px] pl-[8px]">
                <svg width="22" height="20" viewBox="0 0 22 20" className="mr-[10px]" fill="none" stroke="#67696c" strokeWidth="1.700"><path d="M1 1 V19 M5 5 C8 5 8 15 11 15 C14 15 13 4 16 4 C18 4 18 11 21 15" /></svg>
                Voltage (V)
              </Btn>
              <div className="mt-[20px] h-[2px] bg-[#b4b7b7]" />
              <div className="mt-[8px] h-[24px]">Time (s)</div>
              <Field cls="mt-[13px]" label="Minimum" value="88m" unit="s" />
              <Field cls="mt-[14px]" label="Maximum" value="98m" unit="s" />
              <div className="mt-[14px] h-[2px] bg-[#b4b7b7]" />
              <div className="mt-[6px] h-[24px]">Voltage (V)</div>
              <Field cls="mt-[15px]" label="Minimum" value="0" unit="V" />
              <Field cls="mt-[14px]" label="Maximum" value="10" unit="V" focus />
            </div>
          </div>
        </div>
        <div className="flex flex-1 flex-col items-center bg-[#f0f0f0]">
          <svg width="10" height="7" viewBox="0 0 10 7" className="mt-[10px] -ml-[2px]"><path d="M0 7 L5 0 L10 7 Z" fill="#505254" /></svg>
          <i className="mt-[329px] -ml-[2px] h-[372px] w-[18px] bg-[#c1c1c1]" />
          <svg width="10" height="6" viewBox="0 0 10 6" className="mt-[8px] -ml-[2px]"><path d="M0 0 H10 L5 6 Z" fill="#a2a4a6" /></svg>
        </div>
      </div>
    </aside>
  );
}

/* ---------- Taskbar ---------- */

function TaskCell({ children, cls = '', line = true, bg = '' }) {
  return (
    <div className={'flex h-[56px] shrink-0 flex-col items-center ' + bg + ' ' + cls}>
      <div className="flex flex-1 items-center justify-center pt-[2px]">{children}</div>
      {line && <i className="h-[3px] w-full shrink-0 bg-[#76b2ea]" />}
    </div>
  );
}

function Taskbar() {
  return (
    <div className={'flex h-[56px] items-center bg-linear-to-r from-[#203741] via-[#1d3342] to-[#1a2544] text-[#dfe4ea] ' + UI}>
      <div className="flex w-[67px] shrink-0 justify-center pt-px">
        <svg width="23" height="23" viewBox="0 0 23 23" fill="#fff"><path d="M0 3.300 L10 1.800 V11 H0 Z M11.200 1.600 L23 0 V11 H11.200 Z M0 12.200 H10 V21.300 L0 19.800 Z M11.200 12.200 H23 V23 L11.200 21.500 Z" /></svg>
      </div>
      <div className="flex h-[54px] w-[483px] shrink-0 items-center bg-[#f2f3f3] pl-[17px] text-[#3f4144]">
        <svg width="24" height="24" viewBox="0 0 24 24" fill="none" stroke="#222" strokeWidth="1.800"><circle cx="15" cy="8.500" r="7.300" /><path d="M10 14 L1 23" /></svg>
        <span className="ml-[16px] text-[18.5px] tracking-[-0.3px] whitespace-nowrap">Type here to search</span>
      </div>
      <div className="ml-[23px] h-[22px] w-[22px] shrink-0 rounded-full border-[3px] border-[#eef1f3]" />
      <svg width="24" height="22" viewBox="0 0 24 22" className="ml-[45px] shrink-0" fill="none" stroke="#dfe5e8" strokeWidth="1.800"><path d="M2 0 V4 H16 V0 M2 7 H16 V15 H2 Z M2 22 V18 H16 V22 M21 0 V22" /><path d="M21 7 V11" strokeWidth="4" /></svg>
      <TaskCell cls="ml-[32px] w-[56px]">
        <svg width="32" height="26" viewBox="0 0 32 26"><path d="M1 2 Q1 0 3 0 H11 L14 3 V8 H1 Z" fill="#e39b12" /><rect x="1" y="3" width="30" height="21" rx="1" fill="#fdd262" /><path d="M6 26 V15 Q6 13 8 13 H24 Q26 13 26 15 V26 H20.500 V20 H11.500 V26 Z" fill="#2e8be0" /></svg>
      </TaskCell>
      <TaskCell line={false} cls="ml-[12px] w-[56px]">
        <svg width="33" height="34" viewBox="0 0 33 34"><path d="M9 9 V2.500 Q9 1 10.500 1 H22.500 Q24 1 24 2.500 V9" fill="none" stroke="#d7dbde" strokeWidth="2" /><rect y="8" width="33" height="26" rx="1" fill="#f3f4f4" /><rect x="10" y="15" width="6" height="6" fill="#e8481f" /><rect x="17.500" y="15" width="6" height="6" fill="#5fae15" /><rect x="10" y="22.500" width="6" height="6" fill="#1295e8" /><rect x="17.500" y="22.500" width="6" height="6" fill="#fbb50e" /></svg>
      </TaskCell>
      <TaskCell bg="bg-[#4c606a]" cls="ml-[8px] w-[67px]">
        <svg width="32" height="32" viewBox="-16 -16 32 32"><circle r="16" fill="#f7c928" /><path d="M-13.900 -8 A16 16 0 0 1 13.900 -8 H0 L-7 4 Z" fill="#ea4b38" /><path d="M-13.900 -8 A16 16 0 0 0 0 16 L7 4 H-7 Z" fill="#2ba24c" /><circle r="7.600" fill="#fff" /><circle r="6.200" fill="#4a86ea" /></svg>
      </TaskCell>
      <TaskCell cls="ml-[7px] w-[56px]">
        <svg width="38" height="38" viewBox="0 0 38 38" className="-mb-[4px] ml-[3px]"><circle cx="21" cy="7" r="5" fill="#6a72d8" /><circle cx="31" cy="9" r="3.500" fill="#5560c8" /><path d="M14 13 H27 V25 Q24 31 18 30 L14 26 Z" fill="#6870d6" /><path d="M27 14 H34 V24 Q32 29 27 27 Z" fill="#4c55ba" /><rect x="1" y="12" width="18" height="18" rx="1.500" fill="#474fb5" /><text x="10" y="26" textAnchor="middle" fontSize="14" fontWeight="700" fill="#fff">T</text><circle cx="28" cy="27" r="9.500" fill="#dd2036" /><text x="28" y="33" textAnchor="middle" fontSize="16" fill="#fff">1</text></svg>
      </TaskCell>
      <TaskCell cls="ml-[13px] w-[56px]">
        <svg width="34" height="34" viewBox="0 0 34 34"><path d="M2 22 C0 12 10 5 20 7 C29 9 30 17 27 21 C24 24 22 22 22 27 C21 33 5 33 2 22 Z" fill="#cfe1ee" /><circle cx="8" cy="17" r="2.800" fill="#e0564f" /><circle cx="14" cy="12" r="2.600" fill="#3d9c55" /><circle cx="21" cy="12" r="2.400" fill="#f0b63a" /><circle cx="9" cy="24" r="2.600" fill="#4577c6" /><circle cx="16" cy="27" r="2.300" fill="#7b4ba0" /><circle cx="16" cy="20" r="2" fill="#1e3440" /><path d="M30 7 L20 22" stroke="#c9853d" strokeWidth="3" /><path d="M27 8 L28 1 L33 0 L33 6 L30 10 Z" fill="#dba45f" /></svg>
      </TaskCell>
      <TaskCell cls="ml-[13px] w-[56px]">
        <svg width="31" height="31" viewBox="0 0 31 31"><rect width="31" height="31" fill="#2d95ef" /><path d="M0 20 L10 10 L31 31 H0 Z" fill="#164a92" /><path d="M16 25 L23 18 L31 25 V31 H22 Z" fill="#1e68bd" /><circle cx="22" cy="7.500" r="3" fill="#fff" /></svg>
      </TaskCell>
      <div className="ml-auto flex h-[56px] w-[523px] shrink-0 items-center">
        <svg width="29" height="24" viewBox="0 0 29 24" className="shrink-0"><path d="M6 17 A6 6 0 0 1 5 6 A9 8 0 0 1 21 5 A6.500 6.500 0 0 1 23 17 Z" fill="#bfdff7" /><path d="M14 11 Q19 17 18.500 20 A4 4 0 0 1 10.500 20 Q10 17 14 11 Z" fill="#3a94e6" /></svg>
        <span className="ml-[14px] w-[52px] shrink-0 text-[18.5px] tracking-[-0.3px]">31°C</span>
        <span className="w-[85px] shrink-0 pl-px text-[18.5px] tracking-[0.1px] whitespace-nowrap">AQI 91</span>
        <svg width="17" height="10" viewBox="0 0 17 10" className="shrink-0"><path d="M1 9 L8.500 1.500 L16 9" fill="none" stroke="#e6eaef" strokeWidth="1.800" /></svg>
        <svg width="24" height="17" viewBox="0 0 24 17" className="ml-[14px] shrink-0" fill="none" stroke="#e6eaef" strokeWidth="1.600"><path d="M10 4.500 H21 V14.500 H6 V11 M22.500 7.500 V11.500 M2 0 V4 M6.500 0 V4 M1 4 H7.500 V7 L5.500 9 H3 L1 7 Z M4.200 9 V13" /><rect x="9" y="7" width="9.500" height="5" fill="#e6eaef" /></svg>
        <svg width="19" height="19" viewBox="0 0 19 19" className="ml-[13px] shrink-0" fill="none" stroke="#cbd2db" strokeWidth="1.800"><path d="M1 17 A17 17 0 0 1 17 2 M5.500 18 A12.500 12.500 0 0 1 17.500 7 M10 18 A8 8 0 0 1 17.500 11.500" /><circle cx="16" cy="16.500" r="2.200" fill="#fff" stroke="none" /></svg>
        <svg width="24" height="20" viewBox="0 0 24 20" className="ml-[11px] shrink-0" fill="none" stroke="#e6eaef" strokeWidth="1.500"><path d="M1 7 H4.500 L9 2.500 V17.500 L4.500 13 H1 Z M12 7 Q14 10 12 13 M15.500 4.500 Q19 10 15.500 15.500" /><path d="M19 2 Q24 10 19 18" stroke="#76829a" /></svg>
        <div className="ml-[7px] flex w-[44px] shrink-0 flex-col items-center text-[16px] leading-[24px] tracking-[-0.2px]"><span>ENG</span><span>IN</span></div>
        <div className="ml-[4px] flex w-[90px] shrink-0 flex-col items-center pb-px text-[16px] leading-[25px] tracking-[-0.3px] whitespace-nowrap"><span>4:18 PM</span><span>08-Sep-21</span></div>
        <svg width="24" height="24" viewBox="0 0 24 24" className="ml-[18px] shrink-0"><path d="M0 0 H24 V18 H15 V23 L10 18 H0 Z" fill="#fff" /><path d="M4 5 H20 M4 9 H20 M4 13 H13" stroke="#1a2844" strokeWidth="1.600" /><path d="M22 13 Q14 14 15 20 Q21 23 22 13 M14 23 L19 17" fill="#fff" stroke="#1a2844" strokeWidth="1.200" /></svg>
        <i className="ml-[27px] h-[56px] w-px shrink-0 bg-[#8c95a8]" />
      </div>
    </div>
  );
}

export default function App() {
  return (
    <div className="flex h-[1080px] w-[1920px] flex-col overflow-hidden bg-white">
      <div className={UI}>
        <TabStrip />
        <AddressBar />
        <Bookmarks />
      </div>
      <AppHeader />
      <div className="flex h-[812px] bg-white pt-[3px] font-['Lato',sans-serif]">
        <div className="flex w-[1541px] flex-col">
          <Toolbar />
          <div className="flex">
            <SchematicPane />
            <GrapherPane />
          </div>
        </div>
        <Panel />
      </div>
      <Taskbar />
    </div>
  );
}
